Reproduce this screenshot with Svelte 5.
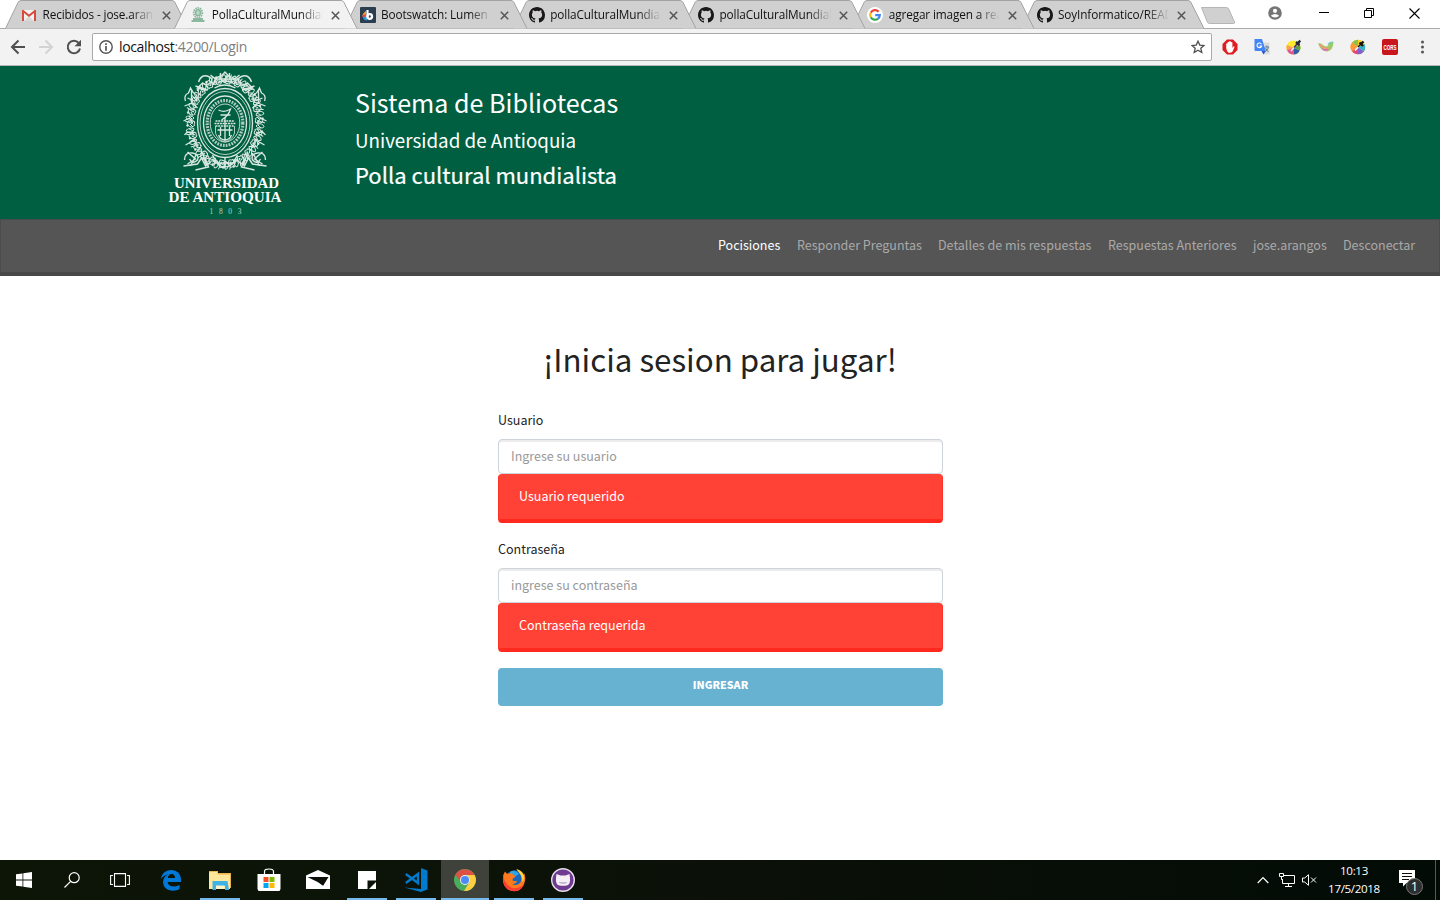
<script>
  const tabs = [
    { icon: 'gmail', title: 'Recibidos - jose.arangos' },
    { icon: 'udea', title: 'PollaCulturalMundialista', active: true },
    { icon: 'boot', title: 'Bootswatch: Lumen' },
    { icon: 'github', title: 'pollaCulturalMundialista' },
    { icon: 'github', title: 'pollaCulturalMundialista' },
    { icon: 'google', title: 'agregar imagen a readme' },
    { icon: 'github', title: 'SoyInformatico/README' }
  ];
  const links = [
    ['Pocisiones', 63],
    ['Responder Preguntas', 125],
    ['Detalles de mis respuestas', 154],
    ['Respuestas Anteriores', 129],
    ['jose.arangos', 74],
    ['Desconectar', 72]
  ];
  const apps = ['edge', 'explorer', 'store', 'mail', 'sticky', 'code', 'chrome', 'firefox', 'ghdesktop'];
  const running = ['explorer', 'sticky', 'code', 'chrome', 'firefox', 'ghdesktop'];
  const fields = [
    { label: 'Usuario', hint: 'Ingrese su usuario', error: 'Usuario requerido', type: 'text' },
    { label: 'Contraseña', hint: 'ingrese su contraseña', error: 'Contraseña requerida', type: 'password' }
  ];
  // leaf scrolls placed round the crest's oval frame
  const scrolls = Array.from({ length: 22 }, (_, i) => {
    const a = (i / 22) * Math.PI * 2;
    return { x: 42.5 + Math.cos(a) * 34, y: 52 + Math.sin(a) * 42, r: (a * 180) / Math.PI };
  });
</script>

{#snippet octocat()}
  <path fill="#191717" d="M8 0C3.58 0 0 3.58 0 8c0 3.54 2.29 6.53 5.47 7.59.4.07.55-.17.55-.38 0-.19-.01-.82-.01-1.49-2.01.37-2.53-.49-2.69-.94-.09-.23-.48-.94-.82-1.13-.28-.15-.68-.52-.01-.53.63-.01 1.08.58 1.23.82.72 1.21 1.87.87 2.33.66.07-.52.28-.87.51-1.07-1.78-.2-3.64-.89-3.64-3.95 0-.87.31-1.59.82-2.15-.08-.2-.36-1.02.08-2.12 0 0 .67-.21 2.2.82a7.6 7.6 0 0 1 4 0c1.53-1.04 2.2-.82 2.2-.82.44 1.1.16 1.92.08 2.12.51.56.82 1.27.82 2.15 0 3.07-1.87 3.75-3.65 3.95.29.25.54.73.54 1.48 0 1.07-.01 1.93-.01 2.2 0 .21.15.46.55.38A8.01 8.01 0 0 0 16 8c0-4.42-3.58-8-8-8z" />
{/snippet}

{#snippet favicon(name)}
  <svg class="fav" viewBox="0 0 16 16">
    {#if name === 'gmail'}
      <path fill="#f2f2f2" d="M1 3h14v11H1z" /><path fill="#d8d8d8" d="M3 14l5-5 5 5z" />
      <path fill="#d54b3d" d="M1 3.2A1.2 1.2 0 0 1 2.4 3L8 7.6 13.600 3A1.200 1.200 0 0 1 15 3.200V14h-2V6L8 10 3 6v8H1z" />
    {:else if name === 'udea'}
      <g fill="none" stroke="#8bb89f"><ellipse cx="8" cy="5.800" rx="2.500" ry="3" fill="#bdd6c7" stroke-width="1.500" /><ellipse cx="8" cy="5.800" rx="4.300" ry="4.900" stroke-dasharray="1.500 .8" stroke-width="1.800" /><path d="M3 12h10M1.500 14h13" stroke-width="1.800" /></g>
    {:else if name === 'boot'}
      <rect width="16" height="16" rx="1" fill="#2b3e50" /><path d="M6 4v5L2.300 9.500C2.500 7 4 5 6 4z" fill="#f59c2f" /><path d="M2.300 8.500L6 7v5.500C4 12 2.600 10.500 2.300 8.500z" fill="#e74c3c" /><path d="M3 10.500L7 9v4.500c-2 0-3.500-1-4-3z" fill="#3498db" /><path d="M7.500 3v7" stroke="#fff" stroke-width="2.200" /><circle cx="9.700" cy="9.500" r="2.300" fill="none" stroke="#fff" stroke-width="2.300" />
    {:else if name === 'github'}
      {@render octocat()}
    {:else}
      <circle cx="8" cy="8" r="8" fill="#fff" /><g fill="none" stroke-width="2.200"><path d="M11.600 4.700A4.800 4.800 0 0 0 3.800 5.700" stroke="#ea4335" /><path d="M3.800 5.700a4.800 4.800 0 0 0 0 4.600" stroke="#fbbc05" /><path d="M3.800 10.300a4.800 4.800 0 0 0 7.300 1.300" stroke="#34a853" /><path d="M11.100 11.600A4.800 4.800 0 0 0 12.800 8.100H8.200" stroke="#4285f4" /></g>
    {/if}
  </svg>
{/snippet}

{#snippet appicon(name)}
  <svg width="24" height="24" viewBox="0 0 24 24">
    {#if name === 'edge'}
      <path fill="#0078d7" d="M2 11C2.700 5.500 6.500 2 12.200 2 18.400 2 22 6.300 22 11.700V14H8.700c.2 3 2.800 4.400 6 4.400 2.200 0 4.200-.6 5.800-1.500v4.200c-1.700 1-4.200 1.600-6.700 1.600-6 0-9.700-3.600-9.700-8.700 0-3.500 1.900-6.100 4.900-7.500C6.300 7 3.600 8.600 2 11zm6.800-.9h7.300C16 7.500 14.700 6 12.500 6c-2 0-3.300 1.500-3.700 4.100z" />
    {:else if name === 'explorer'}
      <path fill="#e8b64a" d="M1 3h9v2h13v15H1z" /><path fill="#ffe79c" d="M2 4h7l1 3h12v14H1V5z" /><path fill="#f6cf6a" d="M10 6h12v1H10z" /><path fill="#3fb3e5" d="M4.500 13h15l1.500 9h-4v-4H8v4H4.500z" /><path fill="#fff3c7" d="M8 17.500h8.500V21H8z" />
    {:else if name === 'store'}
      <path fill="#fff" d="M.5 6h23v15l-1 2h-21l-1-2z" /><path fill="none" stroke="#fff" stroke-width="1.200" d="M7.500 8V3.500Q7.500 1 12 1t4.500 2.500V8" /><path fill="#f25022" d="M6.500 9h5v5h-5z" /><path fill="#7fba00" d="M12.500 9h5v5h-5z" /><path fill="#00a4ef" d="M6.500 15h5v5h-5z" /><path fill="#ffb900" d="M12.500 15h5v5h-5z" />
    {:else if name === 'mail'}
      <path fill="#fff" d="M0 7.500L12 2l12 5.500V21H0z" /><path fill="#0b1108" d="M1.500 9h21L17 18l-5.500-4z" /><path fill="#fff" d="M0 9.500l12 5L18.500 19H0zM18 19l5-9v9z" />
    {:else if name === 'sticky'}
      <path fill="#fff" d="M3 3h18v9.500h-8.500V21H3z" /><path fill="#fff" d="M14 21l7-7v7z" />
    {:else if name === 'code'}
      <path fill="#007acc" d="M17 0l6.500 2.500v19L17 24 .3 19.500 17 21z" /><path fill="none" stroke="#007acc" stroke-width="2.400" d="M1.800 6L14 15V6L1.800 15" />
    {:else if name === 'chrome'}
      <circle cx="12" cy="12" r="11" fill="#4aad5b" /><path fill="#dd5144" d="M2.500 6.400A11 11 0 0 1 21.600 7H12a5 5 0 0 0-4.600 7z" /><path fill="#ffcd40" d="M21.600 7A11 11 0 0 1 11 23l5.300-8.500A5 5 0 0 0 12 7z" /><circle cx="12" cy="12" r="5" fill="#f1f1f1" /><circle cx="12" cy="12" r="4" fill="#4c8bf5" />
    {:else if name === 'firefox'}
      <circle cx="12.500" cy="11" r="8.800" fill="#1667c0" /><path fill="#28a8e8" d="M8 4q5-3.500 9 2l-3 2-5-1z" />
      <path fill="#ff7a1c" d="M3 3.500l2 2.300q1.700-.8 3.500-.3l1.700-2q-.3 2.200.7 3.200l3 1.300q-.4 1.500-3 2.300l-.5 2q2.500 1.500 4.800.4-1 3.300-4.800 3.300 3 2.300 6.600-.3 2.800-2.200 2.300-6.200.2-3.500-5-8.300 5.700 1.300 7.200 5.500l.5-1.700q2 3.500 1 8Q21 22.800 12.500 23.200 3 22.800 1.200 14 .3 7 3 3.500z" />
      <path fill="#ff3c35" d="M2 6q-1 5 2 9 4 6 11 5 5-.8 7.500-5.500Q20.500 22.800 12.500 23.200 3 22.800 1.200 14q-.5-4 .8-8z" /><path fill="#ffd43c" d="M14.300 1.200q5.700 1.300 7.200 5.500 1.500 4-1 7.500 0-7-6.200-13z" />
    {:else}
      <circle cx="12" cy="12" r="11.300" fill="#713a92" stroke="#e5dfe8" stroke-width="1.400" /><path fill="#f4f0f5" d="M5.500 6l4 1.500h5l4-1.500.5 4Q20 17.500 14 17.800h-4Q4 17.500 5 10z" /><path fill="#c9b8d2" d="M8 14h8v1q-4 2-8 0z" />
    {/if}
  </svg>
{/snippet}

<div class="screen">
  <div class="tabstrip">
    {#each tabs as tab, i}
      <div class="tab" class:active={tab.active} style="z-index:{tab.active ? 20 : 10 - i}">
        <svg class="shape" viewBox="0 0 184 29"><path d="M.5 28.500 L13 2.500 Q14 .5 16 .5 H167 Q169 .5 170 2.500 L183 28.500" /></svg>
        {@render favicon(tab.icon)}
        <span class="title">{tab.title}</span>
        <svg class="x" viewBox="0 0 9 9"><path d="M.8 .8l7.400 7.400M8.200 .8L.8 8.200" /></svg>
      </div>
    {/each}
    <svg class="newtab" width="36" height="19" viewBox="0 0 36 19"><path d="M1.500 1.500h25q1.500 0 2.200 1.500l5.800 13q.6 1.500-1 1.500H9.500q-1.500 0-2.200-1.500z" fill="#d0d0d0" stroke="#b5b5b5" /></svg>
    <div class="window">
      <svg width="14" height="14" viewBox="0 0 14 14"><circle cx="7" cy="7" r="6.800" fill="#757575" /><circle cx="7" cy="4.800" r="2.100" fill="#fff" /><path d="M2.800 9.700Q7 6.400 11.200 9.700 9.500 11.500 7 11.500T2.800 9.700z" fill="#fff" /></svg>
      <svg width="10" height="10" viewBox="0 0 10 10"><path d="M0 4.500h10" stroke="#000" /></svg>
      <svg width="10" height="10" viewBox="0 0 10 10"><path d="M.5 2.500h7v7h-7zM2.500 2.500v-2h7v7h-2" fill="none" stroke="#000" /></svg>
      <svg width="11" height="11" viewBox="0 0 11 11"><path d="M.5 .5l10 10M10.500 .5l-10 10" stroke="#000" stroke-width="1.100" /></svg>
    </div>
  </div>

  <div class="toolbar">
    <div class="navbtns">
      <svg width="16" height="16" viewBox="0 0 16 16"><path d="M15 8H2.500M8.500 1.500L2 8l6.500 6.500" fill="none" stroke="#4f4f4f" stroke-width="2" /></svg>
      <svg width="16" height="16" viewBox="0 0 16 16"><path d="M1 8h12.500M7.500 1.500L14 8l-6.500 6.500" fill="none" stroke="#d3d3d3" stroke-width="2" /></svg>
      <svg width="16" height="16" viewBox="0 0 16 16"><path d="M12.700 4A6.200 6.200 0 1 0 14 9.500" fill="none" stroke="#4f4f4f" stroke-width="2" /><path d="M15 .8v6.400H8.600z" fill="#4f4f4f" /></svg>
    </div>
    <div class="omnibox">
      <svg width="14" height="14" viewBox="0 0 14 14"><circle cx="7" cy="7" r="6.200" fill="none" stroke="#555" stroke-width="1.400" /><path d="M7 6v4.700M7 3.200v1.700" stroke="#555" stroke-width="1.700" /></svg>
      <span class="url">localhost<i>:4200/Login</i></span>
      <svg width="14" height="14" viewBox="0 0 14 14"><path d="M7 1.200l1.800 3.900 4.200.4-3.200 2.800 1 4.200L7 10.300l-3.800 2.200 1-4.200L1 5.500l4.200-.4z" fill="none" stroke="#4f4f4f" stroke-width="1.300" /></svg>
    </div>
    <div class="exts">
      <svg viewBox="0 0 16 16"><path d="M5 .5h6L15.500 5v6L11 15.500H5L.5 11V5z" fill="#e11b22" /><path d="M4.200 9V4.700q.8-.8 1.400 0V3.200q.8-.8 1.500 0V2.400q.9-.8 1.700 0v.8q.9-.7 1.600.2V9l1.200-1.700q1.200 0 .8.900L10.400 12.700q-1 1.200-3.200 1.100-2.200-.2-3-4.800z" fill="#fff" /></svg>
      <svg viewBox="0 0 16 16"><path d="M6 3.500h9.500V15.500H9.500z" fill="#dcdcdc" /><path d="M.5 0H8l3.800 12H1.500q-1 0-1-1z" fill="#4285f4" /><path d="M7.500 12h4.300l-2.300 3.500z" fill="#2a56c6" /><path d="M7.400 5.200A2.300 2.300 0 1 0 7.600 7H5.500" fill="none" stroke="#fff" stroke-width="1.100" /><path d="M11 8h4M12.900 6.500V8M14.500 8q-.6 3-3 4.500M11.500 9q1.500 2.500 3 4" fill="none" stroke="#607d8b" /></svg>
      <svg viewBox="0 0 16 16"><circle cx="7.500" cy="8.500" r="7" fill="#ffe92b" /><path d="M7.500 8.500L1 11.300A7 7 0 0 1 1 6z" fill="#ffa04f" /><path d="M7.500 8.500l.2 7A7 7 0 0 1 1 11.300z" fill="#df5590" /><path d="M7.500 8.500l6.200 3a7 7 0 0 1-6 4z" fill="#305ca8" /><path d="M7.500 8.500l6.300-3q1.400 3-.1 6z" fill="#5a9f45" /><path d="M5 12l5-6" stroke="#eee" stroke-width="1.500" /><path d="M8 8.500l4-4.500" stroke="#526" stroke-width="1.500" /><path d="M10 3l3.500 3M12.500 3.500l1.800-1.800" stroke="#202a35" stroke-width="2.400" /></svg>
      <svg viewBox="0 0 16 16"><path d="M0 4.500q3-1 5 1.500 3 2.500 5 .5 1-3.500 5.500-3.500Q15 12 9 12.500 3 12.500 0 4.500z" fill="#9ccc65" /><path d="M.5 4.800q3 0 5 2.500t5 1q1 2-2 2.500-5 0-8-6z" fill="#f39b72" /><path d="M3 8.500q3 3 8 1l-2 2.500q-4 0-6-3.500z" fill="#e16ac5" /><path d="M9.500 5.500Q10.500 2.500 15.500 2.500L14 4.500l-3.500 1z" fill="#71c7b8" /></svg>
      <svg viewBox="0 0 16 16"><circle cx="8" cy="8" r="7.300" fill="#ffd21e" /><path d="M8 8L2 3.500A7.300 7.300 0 0 1 8 .7z" fill="#8bc34a" /><path d="M8 8L2 12.500a7.500 7.500 0 0 1 0-9z" fill="#ff9838" /><path d="M8 8v7.300a7.300 7.300 0 0 1-6-3z" fill="#e84379" /><path d="M8 8l6 4.500a7.500 7.500 0 0 1-6 2.800z" fill="#7d61d1" /><path d="M8 8l6.500-3q1.500 4-.5 7.500z" fill="#32b3c9" /><path d="M5 11.500l5-5.500" stroke="#fff" stroke-width="1.600" /><path d="M8 8l3-3" stroke="#111" stroke-width="1.500" /><path d="M9.500 3.500l3.500 3.500M11.500 4.500l2-2" stroke="#111" stroke-width="2.200" /></svg>
      <svg viewBox="0 0 16 16"><rect width="16" height="16" rx="2" fill="#c9161d" /><text x="1.500" y="10.500" font-size="7" font-weight="700" fill="#fff" font-family="Liberation Sans, sans-serif" textLength="13" lengthAdjust="spacingAndGlyphs">CORS</text></svg>
      <svg viewBox="0 0 16 16"><g fill="#555"><circle cx="8.500" cy="3" r="1.500" /><circle cx="8.500" cy="8" r="1.500" /><circle cx="8.500" cy="13" r="1.500" /></g></svg>
    </div>
  </div>

  <header>
    <svg class="crest" width="114" height="150" viewBox="0 0 114 150">
      <g transform="translate(14.500 2)" fill="none" stroke="#d8e8e1">
        <ellipse cx="42.500" cy="53" rx="27.500" ry="34.500" stroke-width="1.300" />
        <ellipse cx="42.500" cy="53" rx="25" ry="31.500" stroke-width=".8" />
        <ellipse cx="42.500" cy="53" rx="21.500" ry="27" stroke-width="1.300" />
        <ellipse cx="42.500" cy="53" rx="17.800" ry="22.500" stroke-width="3.200" stroke-dasharray="1.800 1.100" opacity=".8" />
        <ellipse cx="42.500" cy="53" rx="14.800" ry="19" stroke-width=".9" />
        <path d="M33 56v7q2 7 9.500 9 7.500-2 9.500-9v-7" stroke-width=".8" />
        <path d="M33 51h19M32 53.500h21M33 56h19" stroke-width="1.400" stroke-dasharray="2 .7" />
        <path d="M36 40q6 3 12-1-2 7-9 11M38 45h10M42.500 48v23M36 65q2 5 6.500 5t6.500-5M38 57v9M47 57v9M35 60h15" stroke-width="1.300" />
        {#each scrolls as s}
          <g transform="translate({s.x} {s.y}) rotate({s.r})" stroke-width="1">
            <path d="M-4-3Q0-7 3-3T-1 1Q-5 1-3-3M-3 4Q1 0 4 3T1 6Q-2 6-3 4M0-1l6 2M-4 0l4 2M-2-5l3 3M-1 3l3 3" />
            <circle cx="3.500" cy="-3.500" r="1.200" fill="#d8e8e1" stroke="none" />
            <circle cx="-1" cy="-1" r="1" fill="#d8e8e1" stroke="none" />
          </g>
        {/each}
        <path d="M16 12q3-9 11-5 4 2 1 6-5 3-8 0l-5 5 8 2M69 12q-3-9-11-5-4 2-1 6 5 3 8 0l5 5-8 2M31 15q1-9 7-8l4.500-5L47 7q6-1 7 8M34 9h17M35 13q7-4 15 0M38 8V3M47 8V3M13 16l12 4M72 16l-12 4M32 18q10-6 21 0M28 5l6 5M57 5l-6 5" stroke-width="1.400" />
        <path d="M3 31q-2-6 3-8l2-5 3 5q6 2 2 8M5 28l7 3M9 20v14M2 36l8-3 5 5M82 31q2-6-3-8l-2-5-3 5q-6 2-2 8M80 28l-7 3M76 20v14M83 36l-8-3-5 5M2 65q4-6 10 0M83 65q-4-6-10 0M1 51l6-3 3 5M84 51l-6-3-3 5M3 75l9-5 3 8M82 75l-9-5-3 8" stroke-width="1.300" />
        <path d="M2 90q0-8 8-7 7 1 5 7-5 5-8-1M83 90q0-8-8-7-7 1-5 7 5 5 8-1M1 96l14-2 4-6 4 8 5-4M84 96l-14-2-4-6-4 8-5-4M20 83l4 12M65 83l-4 12M13 100l13-3-3-8M72 100l-13-3 3-8M30 89q5 7 12.500 3 8 4 12.500-3M35 94q7 6 15 0M42.500 88v10M5 82l8 7-8 5M80 82l-8 7 8 5M14 84l-6 12M71 84l6 12M30 85l5 9M55 85l-5 9" stroke-width="1.400" />
      </g>
      <g fill="#fff" font-family="Liberation Serif, serif" text-anchor="middle">
        <text x="58.500" y="119.500" font-size="15" font-weight="700" textLength="105" lengthAdjust="spacingAndGlyphs">UNIVERSIDAD</text>
        <text x="57" y="134.300" font-size="15" font-weight="700" textLength="113" lengthAdjust="spacingAndGlyphs">DE ANTIOQUIA</text>
        <text x="57.500" y="145.500" font-size="7.500" fill="#b5d3c5" textLength="32">1803</text>
      </g>
    </svg>
    <div class="names">
      <h3>Sistema de Bibliotecas</h3>
      <h5>Universidad de Antioquia</h5>
      <h4>Polla cultural mundialista</h4>
    </div>
  </header>

  <nav>
    {#each links as [text, w], i}
      <a class:current={i === 0} style="width:{w}px" href="#top">{text}</a>
    {/each}
  </nav>

  <main>
    <h1>¡Inicia sesion para jugar!</h1>
    <form>
      {#each fields as f}
        <div class="group">
          <label for={f.label}>{f.label}</label>
          <input id={f.label} type={f.type} placeholder={f.hint} />
          <div class="alert">{f.error}</div>
        </div>
      {/each}
      <button type="button">Ingresar</button>
    </form>
  </main>

  <footer>
    <div class="cell"><svg width="16" height="16" viewBox="0 0 16 16" fill="#fff"><path d="M0 2.300l6.500-.9v6.100H0zM7.300 1.200L16 0v7.500H7.300zM0 8.400h6.500v6.200L0 13.700zM7.300 8.400H16V16l-8.700-1.200z" /></svg></div>
    <div class="cell"><svg width="16" height="16" viewBox="0 0 16 16" fill="none" stroke="#fff" stroke-width="1.200"><circle cx="10.200" cy="5.700" r="5" /><path d="M6.600 9.300L.5 15.500" /></svg></div>
    <div class="cell"><svg width="20" height="14" viewBox="0 0 20 14" fill="none" stroke="#fff" stroke-width="1.100"><path d="M4.500 .6h11v12.800h-11zM3 2.500H.6v9H3M17 2.500h2.400v9H17" /></svg></div>
    <div class="apps">
      {#each apps as a}
        <div class="cell" class:run={running.includes(a)} class:focus={a === 'chrome'}>{@render appicon(a)}</div>
      {/each}
    </div>
    <div class="tray">
      <svg width="12" height="8" viewBox="0 0 12 8"><path d="M.7 7L6 1.500 11.300 7" fill="none" stroke="#fff" stroke-width="1.200" /></svg>
      <svg width="17" height="14" viewBox="0 0 17 14" fill="none" stroke="#fff"><path d="M5 2.500h10.500v8H3.500V6M9.500 10.500v3M6 13.500h7M.5 .5h4v3h-4zM2.500 3.500v3h1" /></svg>
      <svg width="15" height="12" viewBox="0 0 15 12" fill="none" stroke="#fff"><path d="M.5 4h2.200L6.500.700v10.600L2.700 8H.5zM9 3.500l5 5M14 3.500l-5 5" /></svg>
      <div class="clock"><span>10:13</span><span>17/5/2018</span></div>
      <svg class="note" width="26" height="26" viewBox="0 0 26 26"><path d="M1 0h16v13H8.500L5 16.500V13H1z" fill="#fff" /><path d="M4 3.500h10M4 6.500h10M4 9.500h7" stroke="#0b110b" /><circle cx="16.500" cy="16.500" r="8" fill="#2d2f2e" stroke="#777" /><text x="16.500" y="21.200" text-anchor="middle" font-size="13" fill="#fff" font-family="Open Sans, sans-serif">1</text></svg>
      <div class="peek"></div>
    </div>
  </footer>
</div>

<style>
  :global(body) { margin: 0; background: #fff; }
  * { box-sizing: border-box; }
  svg { display: block; flex: none; }
  .screen { width: 1440px; height: 900px; display: flex; flex-direction: column; overflow: hidden; background: #fff; font-family: "Noto Sans CJK SC", "Noto Sans", sans-serif; }

  .tabstrip { height: 29px; flex: none; display: flex; padding-left: 5px; box-shadow: inset 0 -1px #ababab; font-family: "Open Sans", sans-serif; position: relative; z-index: 1; }
  .tab { position: relative; width: 184px; height: 29px; margin-right: -14.750px; flex: none; display: flex; align-items: center; padding: 1px 0 0 16px; }
  .shape { position: absolute; inset: 0; width: 184px; height: 29px; z-index: -1; }
  .shape path { fill: #d0d0d0; stroke: #a3a3a3; }
  .tab.active { height: 30px; margin-bottom: -1px; padding-bottom: 1px; }
  .tab.active .shape path { fill: #f2f2f2; }
  .fav { width: 16px; height: 16px; margin-right: 5.500px; }
  .title { width: 111px; height: 18px; font-size: 11.800px; line-height: 17px; letter-spacing: -0.130px; white-space: nowrap; overflow: hidden; color: #111; -webkit-mask: linear-gradient(90deg, #000 88px, transparent 111px); mask: linear-gradient(90deg, #000 88px, transparent 111px); }
  .x { width: 9px; height: 9px; margin: 1px 0 0 8px; }
  .x path { stroke: #555; stroke-width: 1.500; }
  .newtab { margin: 6px 0 0 10px; }
  .window { margin: 6px 0 0 32px; height: 14px; display: flex; align-items: center; gap: 35px; }
  .window svg:nth-child(2) { margin-left: 2px; }

  .toolbar { height: 37px; flex: none; background: #f2f2f2; border-bottom: 1px solid #b6b6b6; display: flex; align-items: center; padding: 0 10px; }
  .navbtns { display: flex; gap: 12px; width: 82px; }
  .omnibox { width: 1120px; height: 28px; border: 1px solid #a9a9a9; border-radius: 2px; background: #fff; display: flex; align-items: center; padding: 0 6px; }
  .url { flex: 1; margin-left: 6px; font: 14px/20px "Open Sans", sans-serif; letter-spacing: -0.350px; color: #111; }
  .url i { font-style: normal; color: #808080; }
  .exts { display: flex; gap: 16px; margin-left: 10px; }
  .exts svg { width: 16px; height: 16px; }

  header { height: 153px; flex: none; background: #005f41; display: flex; padding-left: 168px; }
  .crest { margin-top: 2px; }
  .names { margin: 19px 0 0 73px; color: #fff; }
  h1, h3, h4, h5 { margin: 0; font-weight: 400; white-space: nowrap; }
  h3 { font-size: 25.100px; line-height: 34px; }
  h5 { font-size: 18.800px; line-height: 24px; margin-top: 9px; }
  h4 { font-size: 22px; line-height: 30px; margin-top: 7px; -webkit-text-stroke: .2px #fff; }

  nav { height: 57px; flex: none; background: #555; border: 1px solid #4b4b4b; border-width: 1px 1px 4px; border-bottom-color: #484848; display: flex; justify-content: flex-end; align-items: center; gap: 16px; padding: 0 24px 4px 0; }
  a { font-size: 12.500px; line-height: 21px; color: #a9a9a9; text-decoration: none; white-space: nowrap; }
  a.current { color: #fff; }

  main { flex: 1; padding-top: 62px; }
  h1 { font-size: 31.300px; line-height: 42px; text-align: center; color: #222; }
  form { width: 445px; margin: 29px 0 0 498px; display: flex; flex-direction: column; }
  .group { display: flex; flex-direction: column; margin-bottom: 16px; }
  label { font-size: 12.500px; line-height: 21px; margin-bottom: 9px; color: #222; }
  .group + .group { margin-top: 0; }
  input { height: 35px; border: 1px solid #ced4da; border-radius: 4px; padding: 0 12px 2px; font: 12.500px/21px "Noto Sans CJK SC", sans-serif; background: #fff; box-shadow: inset 0 2px 0 rgba(0, 0, 0, .075); outline: none; }
  input::placeholder { color: #999; opacity: 1; }
  .alert { height: 49px; background: #ff4136; border: 1px solid #ff3227; border-width: 0 1px 4px; border-bottom-color: #ff291d; border-radius: 4px; color: #fff; font-size: 12.500px; line-height: 21px; padding: 11px 20px; }
  .group { margin-bottom: 15px; }
  button { height: 38px; margin-top: 1px; border: 0; border-radius: 4px; background: #67b1d1; color: #fff; font: 900 10.700px/18px "Noto Sans CJK SC", sans-serif; text-transform: uppercase; padding: 0 0 4px; }

  footer { height: 40px; flex: none; background: linear-gradient(90deg, #0d1507, #0b1108 50%, #030b06); display: flex; }
  .cell { width: 48px; height: 40px; display: flex; align-items: center; justify-content: center; }
  .apps { display: flex; gap: 1px; margin-left: 3px; }
  .run { background: linear-gradient(#76b9ed, #76b9ed) center bottom / 40px 2px no-repeat; }
  .focus { background: linear-gradient(#76b9ed, #76b9ed) center bottom / 48px 2px no-repeat, #3e423b; }
  .tray { margin-left: auto; display: flex; align-items: center; }
  .tray > svg { margin-right: 10px; }
  .tray > svg:nth-child(2) { margin-right: 6px; }
  .clock { width: 54px; display: flex; flex-direction: column; align-items: center; color: #fff; font: 11.600px/18px "Open Sans", sans-serif; letter-spacing: -0.350px; white-space: nowrap; }
  .tray > .note { margin: 6px 11px 0 17px; }
  .peek { width: 5px; height: 40px; border-left: 1px solid #555b57; }
</style>
